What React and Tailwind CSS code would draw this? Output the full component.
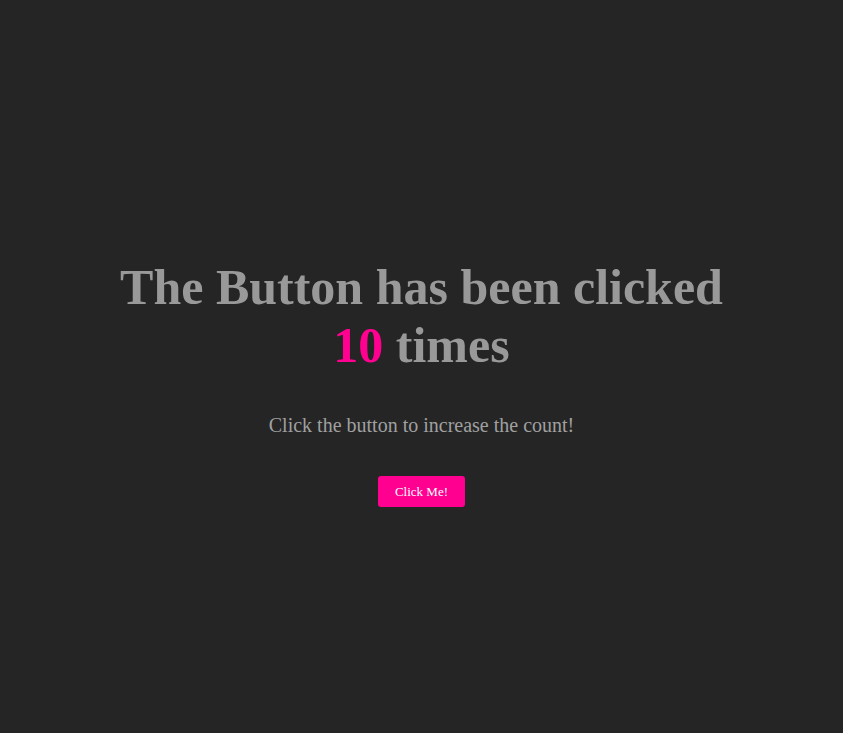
export default function App() {
  return (
    <div
      className="min-h-screen bg-[#252525] flex flex-col items-center justify-center text-center pt-[32px]"
      style={{ fontFamily: '"Liberation Serif", "Times New Roman", serif' }}
    >
      <h1 className="text-[50px] font-bold text-[#999999] leading-[58px] max-w-[640px]">
        The Button has been clicked <span className="text-[#ff0090]">10</span> times
      </h1>
      <p className="mt-[36px] text-[20px] text-[#a0a0a0]">Click the button to increase the count!</p>
      <button className="mt-[36px] h-[31px] px-[17px] rounded-[3px] bg-[#ff0090] text-white text-[13px]">
        Click Me!
      </button>
    </div>
  );
}
